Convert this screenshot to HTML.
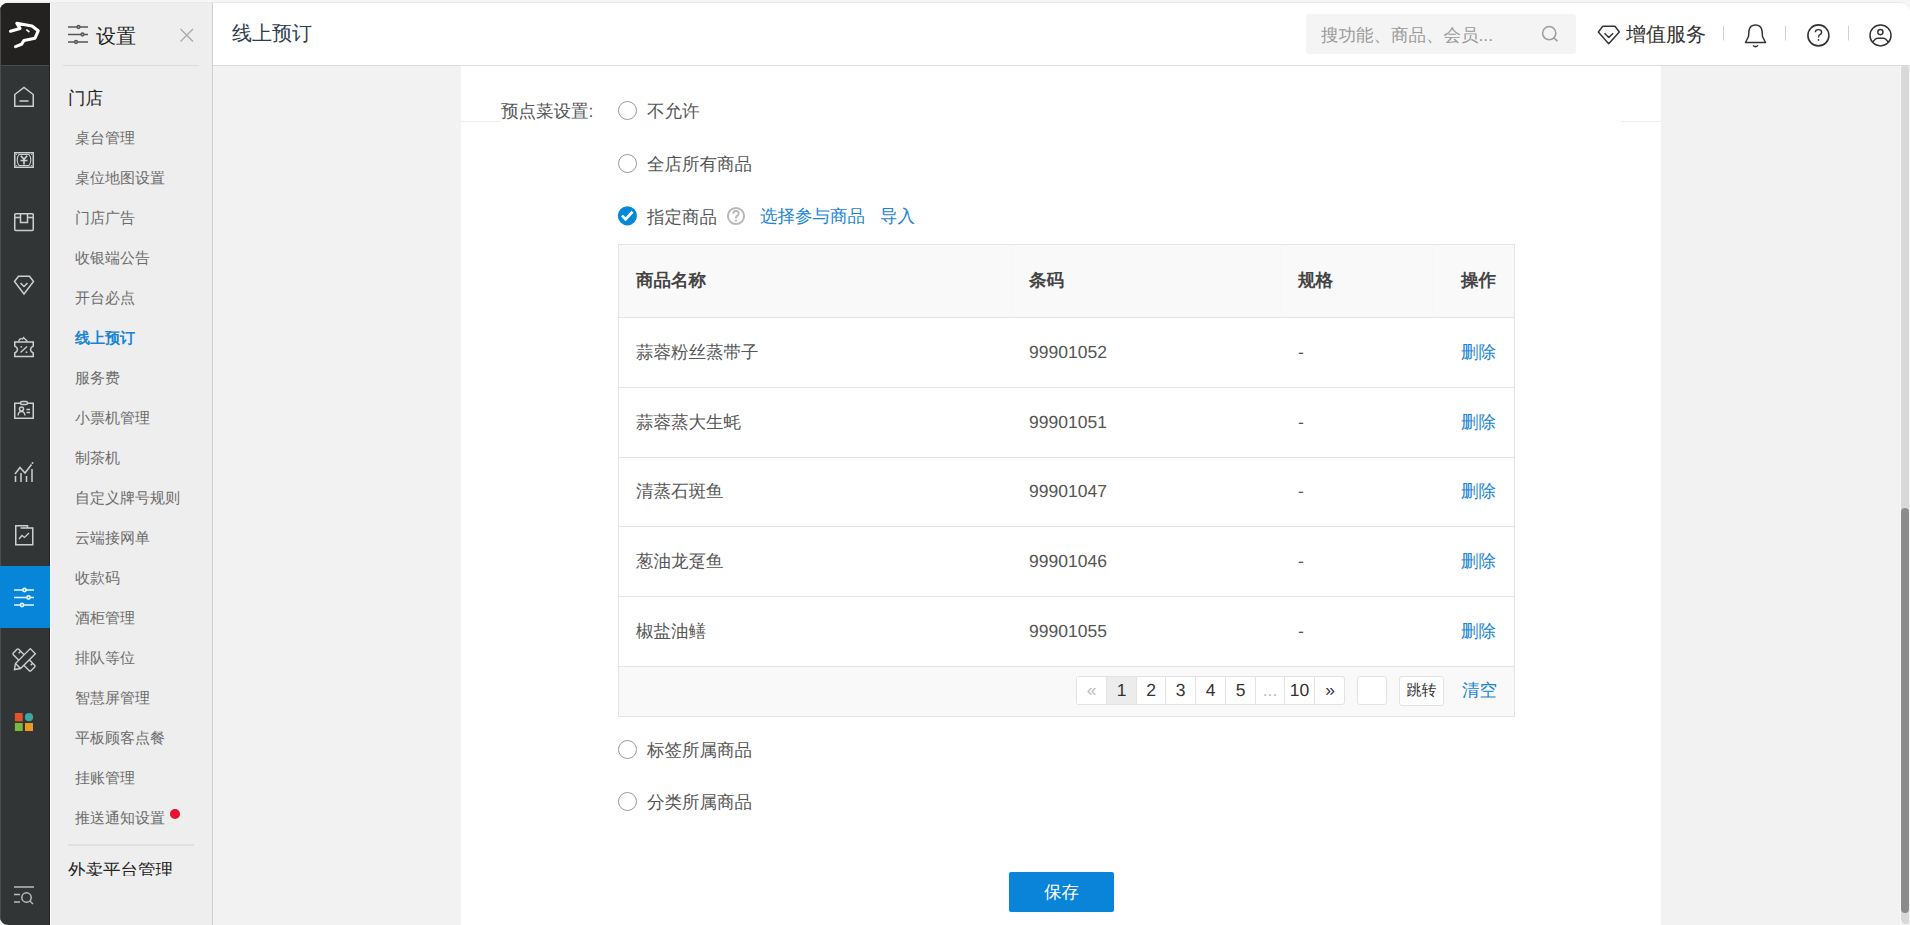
<!DOCTYPE html>
<html><head><meta charset="utf-8">
<style>
*{box-sizing:border-box;margin:0;padding:0}
html,body{width:1910px;height:925px;overflow:hidden;background:#f6f6f6;font-family:"Liberation Sans",sans-serif;text-rendering:geometricPrecision}
.a{position:absolute;white-space:nowrap}
#rail{position:absolute;left:0;top:3px;width:50px;height:922px;background:#323536;border-radius:8px 0 0 8px;overflow:hidden}
#logo{position:absolute;left:0;top:0;width:50px;height:62px;background:#242220}
#active{position:absolute;left:0;top:563px;width:50px;height:62px;background:#0786d9}
#sub{position:absolute;left:51px;top:3px;width:161px;height:922px;background:#eeeeee}
#subline{position:absolute;left:212px;top:3px;width:1px;height:922px;background:#cfcfcf}
.it{position:absolute;left:75px;font-size:15px;color:#6c6c6c;line-height:20px;white-space:nowrap}
#header{position:absolute;left:213px;top:3px;width:1697px;height:62px;background:#fff;border-radius:0 9px 0 0}
#hline{position:absolute;left:213px;top:65px;width:1697px;height:1px;background:#dcdcdc}
#main{position:absolute;left:213px;top:66px;width:1697px;height:859px;background:#f2f2f2}
#card{position:absolute;left:461px;top:66px;width:1200px;height:859px;background:#fff}
.radio{position:absolute;left:618px;width:19px;height:19px;border:1px solid #999;border-radius:50%;background:#fff}
.rt{position:absolute;left:647px;font-size:17.5px;color:#555;line-height:20px;white-space:nowrap}
#tbl{position:absolute;left:618px;top:244px;width:897px;height:473px;border:1px solid #e5e5e5;background:#fff}
.th{position:absolute;font-size:17.5px;font-weight:bold;color:#444;line-height:20px;white-space:nowrap}
.td{position:absolute;font-size:17.5px;color:#555;line-height:20px;white-space:nowrap}
.del{position:absolute;font-size:17.5px;color:#1a84d4;line-height:20px;white-space:nowrap}
.hr{position:absolute;left:619px;width:895px;height:1px;background:#e5e5e5}
.pc{position:absolute;top:676px;height:29px;width:30px;border:1px solid #e3e3e3;border-left:none;background:#fff;font-size:17.5px;color:#333;line-height:27px;text-align:center}
svg{position:absolute;overflow:visible}
</style></head><body>

<div class="a" style="left:0;top:2px;width:1910px;height:923px;background:#e9e9e9;border-radius:9px 10px 0 9px"></div>
<div id="rail">
  <div id="logo"></div>
  <div class="a" style="left:0;top:62px;width:50px;height:1px;background:#4a4b4b"></div>
  <div class="a" style="left:0;top:0;width:1px;height:922px;background:#4a4d4e"></div>
  <div class="a" style="left:49px;top:0;width:1px;height:922px;background:#222526"></div>
  <div id="active"></div>
</div>
<div class="a" style="left:50px;top:3px;width:1px;height:922px;background:#fbfbfb"></div>
<svg style="left:0;top:0" width="50" height="925" fill="none" stroke="#cfcfcf" stroke-width="1.5">
  <!-- logo -->
  <path d="M10.5,31.2 L20,28.4 L16.8,23.3 L32,26 L38.2,30.8 L35,38.2 L24,40.4 L21.5,44.3 L15.5,46.6" stroke="#fff" stroke-width="3.1" stroke-linejoin="round" stroke-linecap="round"/>
  <path d="M26.3,29.6 L29.4,32" stroke="#fff" stroke-width="1.6"/>
  <!-- home -->
  <path d="M14.75,106.25 V94.5 L24,87.5 L33.25,94.5 V106.25 Z M19.5,101 H28.5"/>
  <!-- money -->
  <rect x="14.75" y="152.75" width="18.5" height="14.5"/>
  <path d="M19,154.5 H29 Q30.8,156.5 30.8,160 Q30.8,163.5 29,165.5 H19 Q17.2,163.5 17.2,160 Q17.2,156.5 19,154.5 Z" stroke-width="1.1"/>
  <path d="M20.8,155.8 L24,159.3 L27.2,155.8 M24,159.3 V164.5 M20.5,160.5 H27.5" stroke-width="1.7"/>
  <circle cx="16.6" cy="154.5" r="0.6" fill="#cfcfcf" stroke="none"/><circle cx="31.4" cy="154.5" r="0.6" fill="#cfcfcf" stroke="none"/><circle cx="16.6" cy="165.5" r="0.6" fill="#cfcfcf" stroke="none"/><circle cx="31.4" cy="165.5" r="0.6" fill="#cfcfcf" stroke="none"/>
  <!-- box -->
  <rect x="14.75" y="213.75" width="18.5" height="16.75" rx="1"/>
  <path d="M14.75,217.5 H20.5 M27.5,217.5 H33.25 M20.5,214 V222.5 H27.5 V214"/>
  <!-- diamond -->
  <path d="M18.5,276.25 H29.5 L33.5,281.5 L24,294 L14.5,281.5 Z M20.5,283 L24,286.5 L27.5,283"/>
  <!-- ticket -->
  <path d="M14.75,342 H33.25 V346 Q30.5,347.5 30.5,349.5 Q30.5,351.5 33.25,353 V356.5 H14.75 V353 Q17.5,351.5 17.5,349.5 Q17.5,347.5 14.75,346 Z"/>
  <path d="M18.5,341.5 Q20,337.5 22.5,339 L23.5,337.5 L27.5,341.5" stroke-width="1.3"/>
  <path d="M20.5,352.5 L27,346.5" stroke-width="1.3"/>
  <circle cx="21.3" cy="346.8" r="0.9" fill="#cfcfcf" stroke="none"/><circle cx="26.5" cy="352.2" r="0.9" fill="#cfcfcf" stroke="none"/>
  <!-- id card -->
  <rect x="14.75" y="403.25" width="18.5" height="15"/>
  <rect x="20.5" y="401.5" width="7" height="3" rx="1.5" fill="#323536"/>
  <circle cx="21.5" cy="409" r="2"/>
  <path d="M18,415.5 Q18.5,411.5 21.5,411.5 Q24.5,411.5 25,415.5 M26.5,409.5 H30 M26.5,412.5 H30" stroke-width="1.3"/>
  <!-- chart -->
  <path d="M15,474 L20,467.5 L25,473 L31.5,464.5 M15.5,476 V482 M21,473 V482 M26.5,476 V482 M32,469 V482" />
  <circle cx="32.5" cy="463" r="1" fill="#cfcfcf" stroke="none"/>
  <!-- doc -->
  <path d="M15.75,525.75 H27.5 V528 H32.75 V544.75 H15.75 Z M20.5,528 H27.5"/>
  <path d="M19,539 L22,535.5 L24.5,537.5 L29,533" stroke-width="1.3"/>
  <!-- settings (active) -->
  <g stroke="#e8f6ff" stroke-width="1.6">
    <path d="M14,590 H34 M14,597.5 H34 M14,605 H34"/>
    <circle cx="24.5" cy="590" r="1.6" fill="#0786d9"/><circle cx="28.5" cy="597.5" r="1.6" fill="#0786d9"/><circle cx="22" cy="605" r="1.6" fill="#0786d9"/>
  </g>
  <!-- tools -->
  <g transform="translate(24,660) rotate(45)" stroke-width="1.4"><rect x="-12.5" y="-3.8" width="25" height="7.6" rx="1.2"/><path d="M-8.5,-3.8 V-1 M8.5,-3.8 V-1"/></g>
  <g transform="translate(24,660) rotate(-45)" stroke-width="1.4"><path d="M-13.5,0 L-8.5,-3.6 H12.5 V3.6 H-8.5 Z" fill="#323536"/><path d="M-8.5,-3.6 V3.6"/></g>
  <!-- color grid -->
  <rect x="14.9" y="713" width="7.8" height="8.4" fill="#e2532d" stroke="none"/>
  <circle cx="29" cy="717.2" r="4.1" fill="#3aa89e" stroke="none"/>
  <rect x="14.9" y="723" width="7.8" height="8" fill="#79b843" stroke="none"/>
  <rect x="25" y="723" width="8" height="8" fill="#ec9a1f" stroke="none"/>
  <!-- bottom search -->
  <path d="M14,887 H34 M14,894.5 H20 M14,902 H20" stroke="#bbb"/>
  <circle cx="26.5" cy="897.5" r="4.7" stroke="#bbb"/>
  <path d="M29.8,901 L33,904" stroke="#bbb"/>
</svg>

<div id="sub"></div>
<div id="subline"></div>
<svg style="left:0;top:0" width="212" height="80" fill="none" stroke="#555" stroke-width="1.5">
  <path d="M68,27 H88 M68,34.5 H88 M68,42 H88"/>
  <circle cx="78.5" cy="27" r="1.5" fill="#aaa" stroke-width="1.3"/><circle cx="82.5" cy="34.5" r="1.5" fill="#aaa" stroke-width="1.3"/><circle cx="76" cy="42" r="1.5" fill="#aaa" stroke-width="1.3"/>
  <path d="M180.5,29 L193,41.5 M193,29 L180.5,41.5" stroke="#a8a8a8" stroke-width="1.3"/>
</svg>
<div class="a" style="left:63px;top:65px;width:136px;height:1px;background:#dcdcdc"></div>
<div class="a" style="left:96px;top:27px;font-size:20px;color:#222;line-height:20px">设置</div>
<div class="a" style="left:68px;top:88px;font-size:17.5px;color:#222;line-height:20px">门店</div>
<div class="it" style="top:129px">桌台管理</div>
<div class="it" style="top:169px">桌位地图设置</div>
<div class="it" style="top:209px">门店广告</div>
<div class="it" style="top:249px">收银端公告</div>
<div class="it" style="top:289px">开台必点</div>
<div class="it" style="top:329px;color:#1a84d4;font-weight:bold">线上预订</div>
<div class="it" style="top:369px">服务费</div>
<div class="it" style="top:409px">小票机管理</div>
<div class="it" style="top:449px">制茶机</div>
<div class="it" style="top:489px">自定义牌号规则</div>
<div class="it" style="top:529px">云端接网单</div>
<div class="it" style="top:569px">收款码</div>
<div class="it" style="top:609px">酒柜管理</div>
<div class="it" style="top:649px">排队等位</div>
<div class="it" style="top:689px">智慧屏管理</div>
<div class="it" style="top:729px">平板顾客点餐</div>
<div class="it" style="top:769px">挂账管理</div>
<div class="it" style="top:809px">推送通知设置</div>
<div class="a" style="left:170px;top:809px;width:10px;height:10px;border-radius:50%;background:#e8102e"></div>
<div class="a" style="left:68px;top:844px;width:126px;height:2px;background:#e0e0e0"></div>
<div class="a" style="left:60px;top:855px;width:140px;height:21px;overflow:hidden"><div class="a" style="left:8px;top:5px;font-size:17.5px;color:#222;line-height:20px">外卖平台管理</div></div>

<div id="header"></div>
<div id="hline"></div>
<div class="a" style="left:232px;top:24px;font-size:20px;color:#2d3e50;line-height:20px">线上预订</div>
<div class="a" style="left:1306px;top:14px;width:270px;height:40px;background:#f4f4f4;border-radius:3px"></div>
<div class="a" style="left:1321px;top:25px;font-size:17.5px;color:#999;line-height:20px">搜功能、商品、会员...</div>
<div class="a" style="left:1626px;top:25px;font-size:20px;color:#333;line-height:20px">增值服务</div>
<svg style="left:0;top:0" width="1910" height="60" fill="none" stroke="#333" stroke-width="1.6">
  <circle cx="1549.2" cy="33.2" r="6.6" stroke="#9c9c9c" stroke-width="1.5"/>
  <path d="M1554,38 L1557.4,41.2" stroke="#9c9c9c" stroke-width="1.7"/>
  <path d="M1602.8,26.3 H1615 L1619.3,32 L1608.7,43.8 L1598.3,32 Z M1604.5,33.3 L1608.8,37.6 L1613.2,33.3" stroke-width="1.45" stroke-linejoin="round"/>
  <path d="M1723.5,26 V40.5 M1785.5,26 V40.5 M1848.5,26 V40.5" stroke="#d0d0d0" stroke-width="1"/>
  <path d="M1745.5,42.5 H1765.5 L1762.5,36.5 L1762,30.5 Q1761,25 1755.5,25 Q1750,25 1749,30.5 L1748.5,36.5 Z" stroke-width="1.5" stroke-linejoin="round"/>
  <path d="M1753,45.5 Q1755.5,47.8 1758,45.5" stroke-width="1.5"/>
  <circle cx="1818.4" cy="35.4" r="10.5" stroke-width="1.6"/>
  <path d="M1815.3,32.3 Q1815.3,29.6 1818.5,29.6 Q1821.6,29.6 1821.6,32.2 Q1821.6,33.9 1819.6,34.8 Q1818.5,35.4 1818.5,37.5" stroke-width="1.4"/>
  <circle cx="1818.5" cy="39.9" r="0.85" fill="#333" stroke="none"/>
  <circle cx="1880.5" cy="35.4" r="10.5" stroke-width="1.5"/>
  <circle cx="1880.4" cy="32.1" r="2.6" stroke-width="1.4"/>
  <path d="M1872.6,42.6 Q1875,38.3 1877.8,38.3 H1883.2 Q1886,38.3 1888.4,42.6" stroke-width="1.5"/>
</svg>

<div id="main"></div>
<div id="card"></div>
<div class="a" style="left:461px;top:121px;width:40px;height:1px;background:#eee"></div>
<div class="a" style="left:1621px;top:121px;width:40px;height:1px;background:#eee"></div>

<div class="a" style="left:501px;top:101px;font-size:17.5px;color:#555;line-height:20px">预点菜设置:</div>
<div class="radio" style="top:101px"></div><div class="rt" style="top:101px">不允许</div>
<div class="radio" style="top:154px"></div><div class="rt" style="top:154px">全店所有商品</div>
<svg style="left:0;top:0" width="1" height="1"><circle cx="627.4" cy="215.8" r="9.6" fill="#0787da"/><path d="M622,215.6 L625.6,219.2 L632.6,211.8" stroke="#fff" stroke-width="2.7" fill="none"/></svg>
<div class="rt" style="top:207px">指定商品</div>
<svg style="left:0;top:0" width="1" height="1"><circle cx="736" cy="216" r="8.1" stroke="#b8b8b8" stroke-width="2" fill="none"/>
<path d="M733.3,213.8 Q733.3,211 736,211 Q738.7,211 738.7,213.4 Q738.7,215.1 736.6,216.1 Q736,216.6 736,218.3" stroke="#b8b8b8" stroke-width="1.9" fill="none"/><circle cx="736" cy="220.8" r="1.1" fill="#b8b8b8"/></svg>
<div class="a" style="left:760px;top:206px;font-size:17.5px;color:#1a84d4;line-height:20px">选择参与商品</div>
<div class="a" style="left:880px;top:206px;font-size:17.5px;color:#1a84d4;line-height:20px">导入</div>

<div id="tbl"></div>
<div class="a" style="left:619px;top:245px;width:895px;height:72px;background:#f9f9f9"></div>
<div class="a" style="left:1011px;top:245px;width:1px;height:72px;background:#f7f7f7"></div>
<div class="a" style="left:1280px;top:245px;width:1px;height:72px;background:#f7f7f7"></div>
<div class="a" style="left:1432px;top:245px;width:1px;height:72px;background:#f7f7f7"></div>
<div class="hr" style="top:317px"></div>
<div class="hr" style="top:387px"></div>
<div class="hr" style="top:457px"></div>
<div class="hr" style="top:526px"></div>
<div class="hr" style="top:596px"></div>
<div class="hr" style="top:666px"></div>
<div class="a" style="left:619px;top:667px;width:895px;height:49px;background:#f9f9f9"></div>
<div class="th" style="left:636px;top:270px">商品名称</div>
<div class="th" style="left:1029px;top:270px">条码</div>
<div class="th" style="left:1298px;top:270px">规格</div>
<div class="th" style="left:1461px;top:270px">操作</div>

<div class="td" style="left:636px;top:342px">蒜蓉粉丝蒸带子</div><div class="td" style="left:1029px;top:342px">99901052</div><div class="td" style="left:1298px;top:342px">-</div><div class="del" style="left:1461px;top:342px">删除</div>
<div class="td" style="left:636px;top:412px">蒜蓉蒸大生蚝</div><div class="td" style="left:1029px;top:412px">99901051</div><div class="td" style="left:1298px;top:412px">-</div><div class="del" style="left:1461px;top:412px">删除</div>
<div class="td" style="left:636px;top:481px">清蒸石斑鱼</div><div class="td" style="left:1029px;top:481px">99901047</div><div class="td" style="left:1298px;top:481px">-</div><div class="del" style="left:1461px;top:481px">删除</div>
<div class="td" style="left:636px;top:551px">葱油龙趸鱼</div><div class="td" style="left:1029px;top:551px">99901046</div><div class="td" style="left:1298px;top:551px">-</div><div class="del" style="left:1461px;top:551px">删除</div>
<div class="td" style="left:636px;top:621px">椒盐油鳝</div><div class="td" style="left:1029px;top:621px">99901055</div><div class="td" style="left:1298px;top:621px">-</div><div class="del" style="left:1461px;top:621px">删除</div>

<!-- pagination -->
<div class="a" style="left:1076px;top:676px;width:269px;height:29px;border:1px solid #e3e3e3;border-radius:3px;background:#fff"></div>
<div class="pc" style="left:1077px;width:30px;top:677px;height:27px;line-height:26px;border:none;border-right:1px solid #e3e3e3;color:#bbb;">«</div>
<div class="pc" style="left:1107px;width:30px;top:677px;height:27px;line-height:26px;border:none;border-right:1px solid #e3e3e3;color:#333;background:#ececec;">1</div>
<div class="pc" style="left:1137px;width:29px;top:677px;height:27px;line-height:26px;border:none;border-right:1px solid #e3e3e3;color:#333;">2</div>
<div class="pc" style="left:1166px;width:30px;top:677px;height:27px;line-height:26px;border:none;border-right:1px solid #e3e3e3;color:#333;">3</div>
<div class="pc" style="left:1196px;width:30px;top:677px;height:27px;line-height:26px;border:none;border-right:1px solid #e3e3e3;color:#333;">4</div>
<div class="pc" style="left:1226px;width:30px;top:677px;height:27px;line-height:26px;border:none;border-right:1px solid #e3e3e3;color:#333;">5</div>
<div class="pc" style="left:1256px;width:29px;top:677px;height:27px;line-height:26px;border:none;border-right:1px solid #e3e3e3;color:#bbb;">...</div>
<div class="pc" style="left:1285px;width:30px;top:677px;height:27px;line-height:26px;border:none;border-right:1px solid #e3e3e3;color:#333;">10</div>
<div class="pc" style="left:1315px;width:30px;top:677px;height:27px;line-height:26px;border:none;border-right:1px solid #e3e3e3;color:#333;border-right:none;background:transparent;">»</div>
<div class="a" style="left:1357px;top:676px;width:30px;height:29px;border:1px solid #e3e3e3;border-radius:3px;background:#fff"></div>
<div class="a" style="left:1399px;top:676px;width:45px;height:30px;border:1px solid #e3e3e3;border-radius:3px;background:#fff;font-size:15px;color:#333;line-height:28px;text-align:center">跳转</div>
<div class="a" style="left:1462px;top:680px;font-size:17.5px;color:#1a84d4;line-height:20px">清空</div>

<div class="radio" style="top:740px"></div><div class="rt" style="top:740px">标签所属商品</div>
<div class="radio" style="top:792px"></div><div class="rt" style="top:792px">分类所属商品</div>

<div class="a" style="left:1009px;top:872px;width:105px;height:40px;background:#0a84d8;border-radius:2px;color:#fff;font-size:17.5px;line-height:40px;text-align:center">保存</div>

<div class="a" style="left:1900px;top:66px;width:1px;height:859px;background:#f8f8f8"></div>
<div class="a" style="left:1901px;top:66px;width:8px;height:858px;background:#d9d9d9;border-radius:4px 4px 4px 8px"></div>
<div class="a" style="left:1901px;top:508px;width:8px;height:405px;background:#8c8c8c;border-radius:4px"></div>
</body></html>
